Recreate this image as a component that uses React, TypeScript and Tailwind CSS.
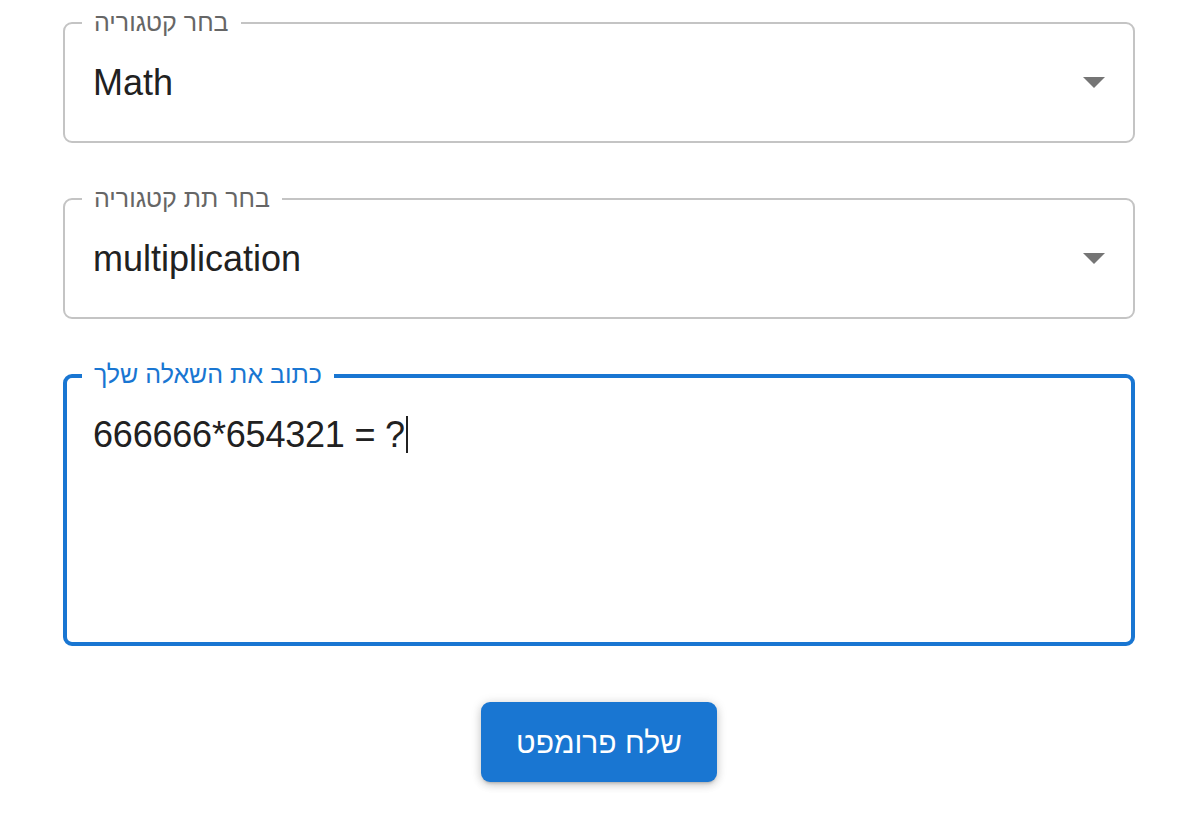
import React from "react";

const font = { fontFamily: '"Liberation Sans", Arial, sans-serif' };

function Arrow() {
  return (
    <svg width="22" height="11" viewBox="7 10 10 5" className="shrink-0">
      <path d="M7 10l5 5 5-5z" fill="#757575" />
    </svg>
  );
}

function SelectField({ label, value }: { label: string; value: string }) {
  return (
    <div className="relative h-[121px] w-full rounded-[9px] border-2 border-[#c4c4c4] flex items-center pl-[28px] pr-[28px]">
      <span className="absolute left-[17px] top-[-2px] -translate-y-1/2 bg-white px-[12px] text-[25px] leading-none text-[#666666] whitespace-nowrap">
        {label}
      </span>
      <span className="flex-1 text-[36px] leading-none text-[#212121]">{value}</span>
      <Arrow />
    </div>
  );
}

export default function App() {
  return (
    <div className="min-h-screen bg-white" style={font}>
      <div className="ml-[63px] w-[1072px] pt-[22px] flex flex-col gap-[55px]">
        <SelectField label="בחר קטגוריה" value="Math" />
        <SelectField label="בחר תת קטגוריה" value="multiplication" />
        <div className="relative h-[272px] w-full rounded-[9px] border-4 border-[#1976d2] pl-[26px] pt-[38px]">
          <span className="absolute left-[15px] top-[-4px] -translate-y-1/2 bg-white px-[12px] text-[25px] leading-none text-[#1976d2] whitespace-nowrap">
            כתוב את השאלה שלך
          </span>
          <div className="flex items-center text-[36px] leading-none text-[#212121]">
            <span className="tracking-[-0.2px]">666666*654321 = ?</span>
            <span className="ml-[1px] inline-block h-[37px] w-[2px] bg-[#212121]" />
          </div>
        </div>
        <div className="flex justify-center pt-[1px]">
          <button className="h-[80px] w-[236px] rounded-[9px] bg-[#1976d2] text-[30px] font-medium text-white shadow-[0_3px_3px_-2px_rgba(0,0,0,0.2),0_3px_8px_0_rgba(0,0,0,0.14),0_1px_12px_0_rgba(0,0,0,0.12)]">
            שלח פרומפט
          </button>
        </div>
      </div>
    </div>
  );
}
